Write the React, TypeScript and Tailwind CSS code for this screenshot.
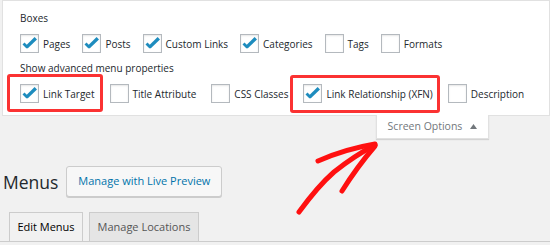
import React from "react";

type Opt = { label: string; checked: boolean };

const boxes: Opt[] = [
  { label: "Pages", checked: true },
  { label: "Posts", checked: true },
  { label: "Custom Links", checked: true },
  { label: "Categories", checked: true },
  { label: "Tags", checked: false },
  { label: "Formats", checked: false },
];

const advanced: Opt[] = [
  { label: "Link Target", checked: true },
  { label: "Title Attribute", checked: false },
  { label: "CSS Classes", checked: false },
  { label: "Link Relationship (XFN)", checked: true },
  { label: "Description", checked: false },
];

function Checkbox({ checked }: { checked: boolean }) {
  return (
    <span className="flex h-[19px] w-[19px] shrink-0 items-center justify-center border border-[#b4b9be] bg-white shadow-[inset_0_1px_2px_rgba(0,0,0,0.1)]">
      {checked && (
        <svg width="17" height="17" viewBox="0 0 17 17">
          <path d="M2.5 8.5 L6.5 12.5" fill="none" stroke="#1e8cbe" strokeWidth="2.8" />
          <path d="M5.4 12.4 L14.8 3.2" fill="none" stroke="#1e8cbe" strokeWidth="3.4" />
        </svg>
      )}
    </span>
  );
}

function OptionRow({ items, gap }: { items: Opt[]; gap: string }) {
  return (
    <div className={`flex items-center ${gap}`}>
      {items.map((o) => (
        <label key={o.label} className="flex items-center gap-[4px]">
          <Checkbox checked={o.checked} />
          <span className="text-[10px] leading-[14px] text-[#23282d]">
            {o.label}
          </span>
        </label>
      ))}
    </div>
  );
}

export default function App() {
  return (
    <div className="relative h-[245px] w-[550px] overflow-hidden bg-[#f1f1f1] font-['Open_Sans',sans-serif]">
      {/* Screen options panel */}
      <div className="ml-[2px] w-[548px] border border-[#e1e1e1] bg-white pt-[10px] pb-[12px] pl-[17px]">
        <div className="text-[10px] leading-[14px] text-[#23282d]">Boxes</div>
        <div className="mt-[9px]">
          <OptionRow items={boxes} gap="gap-[12px]" />
        </div>
        <div className="mt-[8px] text-[10px] leading-[14px] text-[#23282d]">
          Show advanced menu properties
        </div>
        <div className="mt-[9px]">
          <OptionRow items={advanced} gap="gap-[15px]" />
        </div>
      </div>

      {/* Screen Options tab */}
      <div className="-mt-px ml-[376px] flex h-[24px] w-[113px] items-center justify-center gap-[8px] border-x border-b border-[#e1e1e1] bg-white shadow-[0_1px_1px_rgba(0,0,0,0.12)]">
        <span className="text-[10.5px] text-[#72777c]">Screen Options</span>
        <svg width="7" height="5" viewBox="0 0 7 5">
          <path d="M0 5 L3.5 0 L7 5 Z" fill="#72777c" />
        </svg>
      </div>

      {/* Heading */}
      <div className="mt-[27px] flex items-center gap-[8px] pl-[3px]">
        <h1 className="text-[17.5px] leading-[22px] font-normal text-[#23282d]">
          Menus
        </h1>
        <button className="h-[31px] w-[156px] rounded-[3px] border border-[#cccccc] bg-[#f7f7f7] text-[11px] text-[#0073aa] shadow-[0_1px_0_#cccccc]">
          Manage with Live Preview
        </button>
      </div>

      {/* Nav tabs */}
      <div className="mt-[15px] flex gap-[6px] border-b border-[#cccccc] pl-[9px]">
        <div className="-mb-px flex h-[30px] w-[74px] items-center justify-center border border-[#cccccc] bg-[#f1f1f1] text-[11px] text-black">
          Edit Menus
        </div>
        <div className="-mb-px flex h-[30px] w-[110px] items-center justify-center border border-[#cccccc] bg-[#e5e5e5] text-[11px] text-[#555555]">
          Manage Locations
        </div>
      </div>

      {/* Annotation: highlight boxes */}
      <div className="pointer-events-none absolute top-[74px] left-[7px] h-[38px] w-[96px] rounded-[3px] border-[3px] border-[#fb3232]" />
      <div className="pointer-events-none absolute top-[75px] left-[290px] h-[38px] w-[150px] rounded-[3px] border-[3px] border-[#fb3232]" />

      {/* Annotation: arrow */}
      <svg
        className="pointer-events-none absolute top-0 left-0"
        width="550"
        height="245"
        viewBox="0 0 550 245"
      >
        <g fill="none" stroke="#ff1010" strokeLinecap="round" strokeLinejoin="round">
          <path d="M299 212 Q318 186 334 172 Q354 156 375 145" strokeWidth="5" />
          <path d="M318 161 Q345 149 375 144" strokeWidth="5" />
          <path d="M342 191 Q357 167 375 146" strokeWidth="5" />
        </g>
      </svg>
    </div>
  );
}
